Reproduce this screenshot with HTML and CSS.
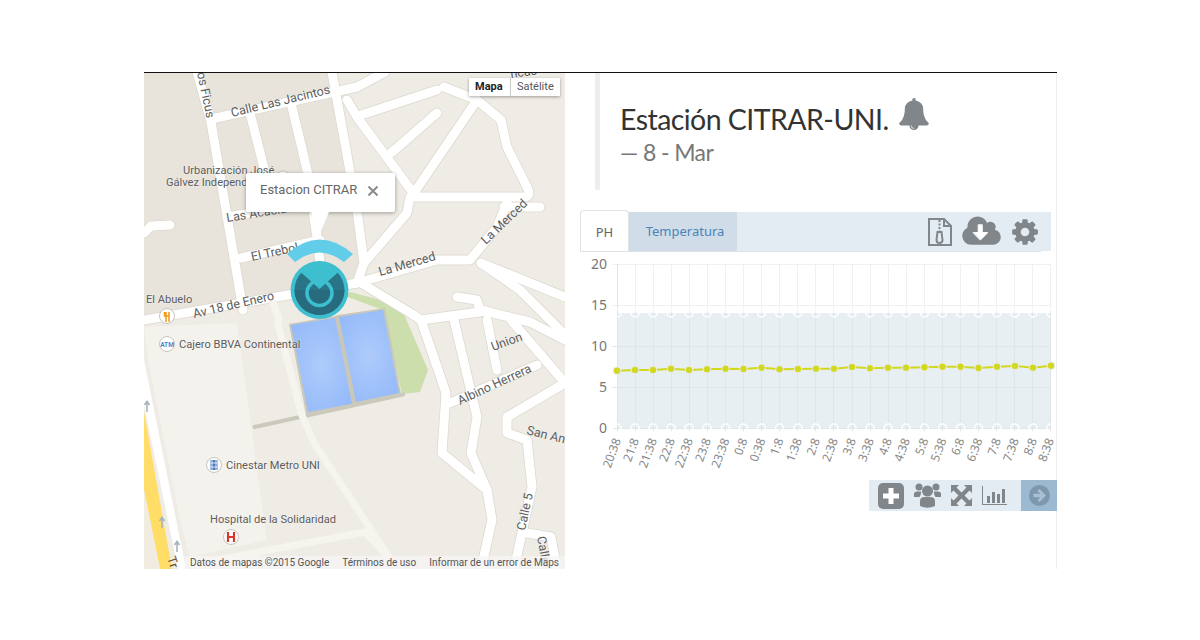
FILE: index.html
```html
<!DOCTYPE html>
<html lang="es">
<head>
<meta charset="utf-8">
<title>Estación CITRAR-UNI</title>
<link rel="stylesheet" href="styles.css">
</head>
<body>
<div class="page">
  <div class="map">
    <svg class="map-art" viewBox="144 72 421 497" width="421" height="497">
      <defs>
        <radialGradient id="pool" cx="50%" cy="50%" r="65%">
          <stop offset="0" stop-color="#aecbfb"/>
          <stop offset="1" stop-color="#93b9f9"/>
        </radialGradient>
        <g id="roads">
          <path d="M197 72L211 122L243 310"/>
          <path d="M211 119L357 87L385 72"/>
          <path d="M250 113L265 172"/>
          <path d="M292 107L307 170L317 237L320 263"/>
          <path d="M332 72L357 210L364 263"/>
          <path d="M347 100L357 117L411 190"/>
          <path d="M361 115L437 90"/>
          <path d="M477 100L414 193"/>
          <path d="M391 153L437 113"/>
          <path d="M414 197L524 197Q532 197 527 187L507 147L501 120L477 100L444 87"/>
          <path d="M504 207L540 207"/>
          <path d="M410 197L407 213L364 263L357 283"/>
          <path d="M357 283L437 260L470 260L497 227L507 203"/>
          <path d="M241 258L320 240"/>
          <path d="M227 217L314 203"/>
          <path d="M144 320L357 283"/>
          <path d="M144 233L151 226L170 225"/>
          <path d="M361 283L412 314L421 320L446 393L442 453L487 490L492 520L481 569"/>
          <path d="M454 320L477 417L471 453L487 490"/>
          <path d="M487 320L497 370"/>
          <path d="M511 320L565 383"/>
          <path d="M450 403L537 365"/>
          <path d="M565 383L507 417L507 433L527 440L532 487L514 569"/>
          <path d="M527 533L551 537L557 569"/>
          <path d="M481 263L565 297"/>
          <path d="M481 263L520 290L565 335"/>
          <path d="M457 297L477 300L480 310L530 322L565 340"/>
          <path d="M421 320L487 311"/>
        </g>
      </defs>
      <rect x="144" y="72" width="421" height="497" fill="#efece5"/>
      <polygon points="144,72 332,72 364,263 357,283 144,320" fill="#e8e4dc"/>
      <polygon points="144,327 237,323 267,540 190,557 180,520 150,370" fill="#f4f2ec"/>
      <polygon points="237,323 277,320 314,443 380,525 267,540" fill="#efece5"/>
      <polygon points="350,292 400,305 428,370 420,392 402,394 383,310 345,296" fill="#cbdeab"/>

      <use href="#roads" class="road-casing"/>
      <use href="#roads" class="road"/>

      <polygon points="144,360 144,405 178,569 186,569" fill="#ffffff"/>
      <polygon points="144,412 172,569 160,569 144,490" fill="#ffdd66"/>
      <polygon points="144,490 160,569 144,569" fill="#f1ece0"/>

      <polygon points="289,324 335,316 338,315 385,308 401,394 358,404 306,414" fill="#c9c7ba"/>
      <polygon points="291,325 335,318 352,404 308,412" fill="url(#pool)"/>
      <polygon points="339,317 383,310 399,393 356,402" fill="url(#pool)"/>
      <path class="bar" d="M254.500 427L403 394.500"/>

      <g class="path-road">
        <path d="M277 320L301 413L314 443L391 560"/>
        <path d="M190 565L365 532L391 560"/>
        <path d="M272 300L280 322"/>
      </g>

      <g class="lbl lbl-street">
        <text transform="translate(232 117) rotate(-13.500)">Calle Las Jacintos</text>
        <text transform="translate(197 73) rotate(78)">os Ficus</text>
        <text transform="translate(227 222) rotate(-9)">Las Acacias</text>
        <text transform="translate(252 261) rotate(-12)">El Trebol</text>
        <text transform="translate(380 276) rotate(-16)">La Merced</text>
        <text transform="translate(486 245) rotate(-44)">La Merced</text>
        <text transform="translate(194 318) rotate(-13)">Av 18 de Enero</text>
        <text transform="translate(493 351) rotate(-20)">Union</text>
        <text transform="translate(460 405) rotate(-25)">Albino Herrera</text>
        <text transform="translate(526 434) rotate(14)">San Andrés</text>
        <text transform="translate(525 531) rotate(-78)">Calle 5</text>
        <text transform="translate(537 537) rotate(80)">Calle</text>
        <text transform="translate(511 78) rotate(-8)">ncas</text>
        <text class="lbl-dark" transform="translate(167 558) rotate(72)">Tr</text>
      </g>
      <g class="lbl lbl-poi">
        <text x="183" y="174">Urbanización José</text>
        <text x="166" y="186">Gálvez Independencia</text>
        <text x="146" y="303">El Abuelo</text>
        <text x="179" y="348">Cajero BBVA Continental</text>
        <text x="226" y="469">Cinestar Metro UNI</text>
        <text x="210" y="523">Hospital de la Solidaridad</text>
      </g>

      <g class="poi">
        <circle cx="283" cy="178" r="7"/>
        <circle cx="167" cy="316" r="7.500"/>
        <circle cx="167" cy="344" r="7.500"/>
        <circle cx="214" cy="465" r="7.500"/>
        <circle cx="231" cy="537" r="7.500"/>
      </g>
      <path d="M164.500 312V316H169M166 312V322M169 312V322" fill="none" stroke="#f09a1c" stroke-width="1.500"/>
      <text class="atm" x="167" y="346.500">ATM</text>
      <rect x="210.500" y="460" width="7" height="10" fill="#4a7cc0"/>
      <path d="M212 460V470M216 460V470M210.500 463H217.500M210.500 467H217.500" stroke="#fff" stroke-width=".8"/>
      <path d="M228 532V542M234 532V542M228 537H234" stroke="#d8372c" stroke-width="2.200" fill="none"/>

      <g class="arrow-road">
        <path d="M147 412V402M144.500 405L147 401.500L149.500 405"/>
        <path d="M162 528V518M159.500 521L162 517.500L164.500 521"/>
        <path d="M177 552V542M174.500 545L177 541.500L179.500 545"/>
      </g>

      <path d="M287 254Q319.500 225 353 254L344 262Q319.500 243 295 262Z" fill="#62cde9"/>
      <circle cx="319.500" cy="290" r="29" fill="#3dbfd0"/>
      <circle cx="319.500" cy="290" r="25" fill="#2a7488"/>
      <path d="M294.500 290A25 25 0 0 0 344.500 290Z" fill="#286a7e"/>
      <circle cx="319.500" cy="293" r="12.500" fill="none" stroke="#3dbfd0" stroke-width="3.500"/>
      <path d="M300 271.500L319.500 289L339 271.500Q330 263 319.500 263Q309 263 300 271.500Z" fill="#3dbfd0"/>
    </svg>

    <div class="map-type">
      <span class="map-type-item map-type-on">Mapa</span>
      <span class="map-type-item">Satélite</span>
    </div>

    <div class="info">
      <span class="info-text">Estacion CITRAR</span>
      <svg class="info-close" viewBox="0 0 10 10" width="10" height="10"><path d="M0.500 0.500L9.500 9.500M9.500 0.500L0.500 9.500"/></svg>
    </div>

    <div class="attribution">
      <span class="attr-item attr-data">Datos de mapas ©2015 Google</span>
      <span class="attr-item attr-terms">Términos de uso</span>
      <span class="attr-item">Informar de un error de Maps</span>
    </div>
  </div>

  <div class="panel">
    <div class="quote">
      <h1 class="title"><span class="title-text">Estación CITRAR-UNI.</span>
        <svg class="bell" viewBox="0 0 1792 1792" width="32" height="32"><path d="M912 1696q0-16-16-16-59 0-101.500-42.500t-42.500-101.500q0-16-16-16t-16 16q0 73 51.500 124.500t124.500 51.500q16 0 16-16zm816-288q0 52-38 90t-90 38h-448q0 106-75 181t-181 75-181-75-75-181h-448q-52 0-90-38t-38-90q50-42 91-88t85-119.500 74.500-158.500 50-206 19.500-260q0-152 117-282.500t307-158.500q-8-19-8-39 0-40 28-68t68-28 68 28 28 68q0 20-8 39 190 28 307 158.500t117 282.500q0 139 19.500 260t50 206 74.500 158.500 85 119.500 91 88z"/></svg>
      </h1>
      <p class="sub">— 8 - Mar</p>
    </div>

    <div class="tabs">
      <div class="tab tab-active">PH</div>
      <div class="tab tab-other">Temperatura</div>
      <div class="tab-tools">
        <svg class="ico ico-zip" viewBox="0 0 24 28" width="24" height="28"><path class="ico-line" d="M1 1H16L23 8V27H1Z"/><path class="ico-line" d="M16 1V8H23"/><path class="ico-dash" d="M11.500 2V13"/><path class="ico-line" d="M9.500 14H13.500L14.500 22A3 3 0 0 1 8.500 22Z"/></svg>
        <svg class="ico" viewBox="0 0 1920 1792" width="39" height="36"><path class="ico-white" d="M800 500H1120V900H1320L960 1320L600 900H800Z"/><path d="M1280 928q0-14-9-23t-23-9h-224v-352q0-13-9.500-22.500t-22.500-9.500h-192q-13 0-22.500 9.500t-9.500 22.500v352h-224q-13 0-22.500 9.500t-9.500 22.500q0 14 9 23l352 352q9 9 23 9t23-9l351-351q10-12 10-24zm640 224q0 159-112.500 271.500t-271.500 112.500h-1088q-185 0-316.500-131.500t-131.500-316.500q0-130 70-240t188-165q-2-30-2-43 0-212 150-362t362-150q156 0 285.500 87t188.500 231q71-62 166-62 106 0 181 75t75 181q0 76-41 138 130 31 213.500 135.500t83.500 238.500z"/></svg>
        <svg class="ico" viewBox="0 0 1792 1792" width="30" height="30"><path d="M1152 896q0-106-75-181t-181-75-181 75-75 181 75 181 181 75 181-75 75-181zm512-109v222q0 12-8 23t-20 13l-185 28q-19 54-39 91 35 50 107 138 10 12 10 25t-9 23q-27 37-99 108t-94 71q-12 0-26-9l-138-108q-44 23-91 38-16 136-29 186-7 28-36 28h-222q-14 0-24.500-8.500t-11.500-21.500l-28-184q-49-16-90-37l-141 107q-10 9-25 9-14 0-25-11-126-114-165-168-7-10-7-23 0-12 8-23 15-21 51-66.500t54-70.500q-27-50-41-99l-183-27q-13-2-21-12.500t-8-23.500v-222q0-12 8-23t19-13l186-28q14-46 39-92-40-57-107-138-10-12-10-24 0-10 9-23 26-36 98.500-107.500t94.500-71.500q13 0 26 10l138 107q44-23 91-38 16-136 29-186 7-28 36-28h222q14 0 24.500 8.500t11.500 21.500l28 184q49 16 90 37l142-107q9-9 24-9 13 0 25 10 129 119 165 170 7 8 7 22 0 12-8 23-15 21-51 66.500t-54 70.500q26 50 41 98l183 28q13 2 21 12.500t8 23.500z"/></svg>
      </div>
    </div>
    <div class="tab-rule"></div>

    <svg class="chart" viewBox="565 252 491 226" width="491" height="226">
      <rect x="617" y="313" width="434" height="115" fill="#e8eff3"/>
      <path class="grid" d="M612 264.500H1051M612 305.500H1051"/>
      <path class="grid-in" d="M612 346.500H1051M612 387.500H1051M612 428.500H1051"/>
      <path class="grid" d="M635.500 264V313M653.500 264V313M671.500 264V313M689.500 264V313M707.500 264V313M725.500 264V313M743.500 264V313M761.500 264V313M779.500 264V313M797.500 264V313M815.500 264V313M833.500 264V313M852.500 264V313M870.500 264V313M888.500 264V313M906.500 264V313M924.500 264V313M942.500 264V313M960.500 264V313M978.500 264V313M996.500 264V313M1014.500 264V313M1032.500 264V313M1050.500 264V313"/>
      <path class="grid-in" d="M617.500 264V432M635.500 313V432M653.500 313V432M671.500 313V432M689.500 313V432M707.500 313V432M725.500 313V432M743.500 313V432M761.500 313V432M779.500 313V432M797.500 313V432M815.500 313V432M833.500 313V432M852.500 313V432M870.500 313V432M888.500 313V432M906.500 313V432M924.500 313V432M942.500 313V432M960.500 313V432M978.500 313V432M996.500 313V432M1014.500 313V432M1032.500 313V432M1050.500 313V432"/>
      <g class="holes">
        <circle cx="617" cy="313" r="4"/><circle cx="635" cy="313" r="4"/><circle cx="653" cy="313" r="4"/><circle cx="671" cy="313" r="4"/><circle cx="689" cy="313" r="4"/><circle cx="707" cy="313" r="4"/><circle cx="725.500" cy="313" r="4"/><circle cx="743.500" cy="313" r="4"/><circle cx="761.500" cy="313" r="4"/><circle cx="779.500" cy="313" r="4"/><circle cx="798" cy="313" r="4"/><circle cx="816" cy="313" r="4"/><circle cx="834" cy="313" r="4"/><circle cx="852" cy="313" r="4"/><circle cx="870" cy="313" r="4"/><circle cx="888" cy="313" r="4"/><circle cx="906" cy="313" r="4"/><circle cx="924.500" cy="313" r="4"/><circle cx="942.500" cy="313" r="4"/><circle cx="960.500" cy="313" r="4"/><circle cx="978.500" cy="313" r="4"/><circle cx="997" cy="313" r="4"/><circle cx="1015" cy="313" r="4"/><circle cx="1033" cy="313" r="4"/><circle cx="1051" cy="313" r="4"/>
        <circle cx="617" cy="428" r="4"/><circle cx="635" cy="428" r="4"/><circle cx="653" cy="428" r="4"/><circle cx="671" cy="428" r="4"/><circle cx="689" cy="428" r="4"/><circle cx="707" cy="428" r="4"/><circle cx="725.500" cy="428" r="4"/><circle cx="743.500" cy="428" r="4"/><circle cx="761.500" cy="428" r="4"/><circle cx="779.500" cy="428" r="4"/><circle cx="798" cy="428" r="4"/><circle cx="816" cy="428" r="4"/><circle cx="834" cy="428" r="4"/><circle cx="852" cy="428" r="4"/><circle cx="870" cy="428" r="4"/><circle cx="888" cy="428" r="4"/><circle cx="906" cy="428" r="4"/><circle cx="924.500" cy="428" r="4"/><circle cx="942.500" cy="428" r="4"/><circle cx="960.500" cy="428" r="4"/><circle cx="978.500" cy="428" r="4"/><circle cx="997" cy="428" r="4"/><circle cx="1015" cy="428" r="4"/><circle cx="1033" cy="428" r="4"/><circle cx="1051" cy="428" r="4"/>
      </g>
      <polyline class="series" points="617,370.700 635,370 653,370 671,368.700 689,370 707,369.300 725.500,368.700 743.500,369 761.500,367.700 779.500,369.300 798,369 816,368.700 834,368.700 852,367 870,368.300 888,367.700 906,367.700 924.500,367.300 942.500,366.700 960.500,366.700 978.500,368 997,366.700 1015,366 1033,367.700 1051,365.700"/>
      <g class="dots">
        <circle cx="617" cy="370.700" r="3.800"/><circle cx="635" cy="370" r="3.800"/><circle cx="653" cy="370" r="3.800"/><circle cx="671" cy="368.700" r="3.800"/><circle cx="689" cy="370" r="3.800"/><circle cx="707" cy="369.300" r="3.800"/><circle cx="725.500" cy="368.700" r="3.800"/><circle cx="743.500" cy="369" r="3.800"/><circle cx="761.500" cy="367.700" r="3.800"/><circle cx="779.500" cy="369.300" r="3.800"/><circle cx="798" cy="369" r="3.800"/><circle cx="816" cy="368.700" r="3.800"/><circle cx="834" cy="368.700" r="3.800"/><circle cx="852" cy="367" r="3.800"/><circle cx="870" cy="368.300" r="3.800"/><circle cx="888" cy="367.700" r="3.800"/><circle cx="906" cy="367.700" r="3.800"/><circle cx="924.500" cy="367.300" r="3.800"/><circle cx="942.500" cy="366.700" r="3.800"/><circle cx="960.500" cy="366.700" r="3.800"/><circle cx="978.500" cy="368" r="3.800"/><circle cx="997" cy="366.700" r="3.800"/><circle cx="1015" cy="366" r="3.800"/><circle cx="1033" cy="367.700" r="3.800"/><circle cx="1051" cy="365.700" r="3.800"/>
      </g>
      <g class="y-labels">
        <text x="607" y="268.500">20</text><text x="607" y="310">15</text><text x="607" y="351">10</text><text x="607" y="392">5</text><text x="607" y="433">0</text>
      </g>
      <g class="x-labels">
        <text transform="translate(621 440) rotate(-70)">20:38</text>
        <text transform="translate(639 440) rotate(-70)">21:8</text>
        <text transform="translate(657 440) rotate(-70)">21:38</text>
        <text transform="translate(675 440) rotate(-70)">22:8</text>
        <text transform="translate(693 440) rotate(-70)">22:38</text>
        <text transform="translate(711 440) rotate(-70)">23:8</text>
        <text transform="translate(729.500 440) rotate(-70)">23:38</text>
        <text transform="translate(747.500 440) rotate(-70)">0:8</text>
        <text transform="translate(765.500 440) rotate(-70)">0:38</text>
        <text transform="translate(783.500 440) rotate(-70)">1:8</text>
        <text transform="translate(802 440) rotate(-70)">1:38</text>
        <text transform="translate(820 440) rotate(-70)">2:8</text>
        <text transform="translate(838 440) rotate(-70)">2:38</text>
        <text transform="translate(856 440) rotate(-70)">3:8</text>
        <text transform="translate(874 440) rotate(-70)">3:38</text>
        <text transform="translate(892 440) rotate(-70)">4:8</text>
        <text transform="translate(910 440) rotate(-70)">4:38</text>
        <text transform="translate(928.500 440) rotate(-70)">5:8</text>
        <text transform="translate(946.500 440) rotate(-70)">5:38</text>
        <text transform="translate(964.500 440) rotate(-70)">6:8</text>
        <text transform="translate(982.500 440) rotate(-70)">6:38</text>
        <text transform="translate(1001 440) rotate(-70)">7:8</text>
        <text transform="translate(1019 440) rotate(-70)">7:38</text>
        <text transform="translate(1037 440) rotate(-70)">8:8</text>
        <text transform="translate(1054 440) rotate(-70)">8:38</text>
      </g>
    </svg>

    <div class="toolbar">
      <div class="tool-icons">
        <svg class="ico" viewBox="0 0 26 26" width="26" height="26"><rect width="26" height="26" rx="5"/><path class="ico-white" d="M10.500 5H15.500V10.500H21V15.500H15.500V21H10.500V15.500H5V10.500H10.500Z"/></svg>
        <svg class="ico" viewBox="0 0 27 25" width="27" height="25"><circle cx="5" cy="4" r="3.500"/><circle cx="22" cy="4" r="3.500"/><circle cx="13.500" cy="8" r="5.500"/><path d="M0 11Q0 8.500 3 8.500H7Q7.500 11 5.500 14H0ZM27 11Q27 8.500 24 8.500H20Q19.500 11 21.500 14H27ZM6 18Q6 14.500 10 14H17Q21 14.500 21 18V23Q13.500 26.500 6 23Z"/></svg>
        <svg class="ico" viewBox="0 0 21 21" width="21" height="21"><path d="M0 0H8L5.500 2.500L10.500 7.500L15.500 2.500L13 0H21V8L18.500 5.500L13.500 10.500L18.500 15.500L21 13V21H13L15.500 18.500L10.500 13.500L5.500 18.500L8 21H0V13L2.500 15.500L7.500 10.500L2.500 5.500L0 8Z"/></svg>
        <svg class="ico" viewBox="0 0 25 19" width="25" height="19"><path d="M0 0H1V18H25V19H0Z"/><rect x="5" y="10" width="3" height="7"/><rect x="10" y="6" width="3" height="11"/><rect x="15" y="8" width="3" height="9"/><rect x="20" y="3" width="3" height="14"/></svg>
      </div>
      <div class="tool-next">
        <svg viewBox="0 0 21 21" width="21" height="21"><circle class="next-disc" cx="10.500" cy="10.500" r="10.500"/><path class="next-arrow" d="M10.500 4L17 10.500L10.500 17L8.500 15L11.500 12.200H4.500V8.800H11.500L8.500 6Z"/></svg>
      </div>
    </div>
  </div>
</div>
</body>
</html>
```

FILE: styles.css
```css
html, body { margin: 0; padding: 0; background: #fff; }
body { font-family: "Lato", "Noto Sans", sans-serif; }

.page {
  display: flex;
  width: 913px;
  height: 496px;
  margin: 72px 0 0 144px;
  border-top: 1px solid #111;
  overflow: hidden;
}

/* Map */
.map { position: relative; width: 421px; height: 496px; flex: none; overflow: hidden; }
.map-art { display: block; margin-top: -1px; }
.road, .road-casing { fill: none; stroke-linecap: round; stroke-linejoin: round; }
.road { stroke: #fff; stroke-width: 9; }
.road-casing { stroke: #dcd8cf; stroke-width: 10.500; }
.bar { fill: none; stroke: #cbc9bc; stroke-width: 4; stroke-linecap: round; }
.path-road path { fill: none; stroke: #f6f4ef; stroke-width: 7; stroke-linejoin: round; }
.lbl text { font-family: "Roboto", sans-serif; fill: #5c5c5c; stroke: rgba(255,255,255,.4); stroke-width: 1px; paint-order: stroke; }
.lbl-street text { font-size: 12.500px; }
.lbl-poi text { font-size: 11.100px; }
.lbl .lbl-dark { fill: #6b4a10; }
.poi circle { fill: #fff; stroke: #c8c5bd; stroke-width: 1; }
.atm { font: bold 6.500px "Roboto", sans-serif; fill: #4a86c8; text-anchor: middle; }
.arrow-road path { fill: none; stroke: #a9b5bd; stroke-width: 1.600; }

.map-type {
  position: absolute;
  top: 5px;
  left: 325px;
  display: flex;
  height: 18px;
  background: #fff;
  box-shadow: 0 1px 3px rgba(0,0,0,.35);
  font: 11px/18px "Roboto", sans-serif;
}
.map-type-item { padding: 0 6px; color: #565656; }
.map-type-on { width: 29px; padding: 0 6px; color: #222; font-weight: 700; border-right: 1px solid #c8c8c8; }

.info {
  position: absolute;
  top: 100px;
  left: 102px;
  box-sizing: border-box;
  width: 149px;
  height: 39px;
  display: flex;
  align-items: flex-start;
  justify-content: space-between;
  padding: 9px 17px 0 14px;
  background: #fff;
  border-radius: 2px;
  box-shadow: 0 1px 4px rgba(0,0,0,.35);
  font: 13px/16px "Roboto", sans-serif;
  color: #666;
}
.info::after {
  content: "";
  position: absolute;
  left: 65px;
  top: 39px;
  width: 0;
  height: 0;
  border-left: 9px solid transparent;
  border-right: 9px solid transparent;
  border-top: 21px solid #fff;
}
.info-close { margin-top: 4px; }
.info-close path { stroke: #8a8a8a; stroke-width: 2; fill: none; }

.attribution {
  position: absolute;
  right: 0;
  bottom: 0;
  display: flex;
  height: 13px;
  padding-left: 5px;
  background: rgba(245,245,245,.75);
  font: 10px/13px "Roboto", sans-serif;
  color: #555;
}
.attr-item { padding: 0 6px; }
.attr-data { padding-left: 0; margin-right: 1px; }
.attr-terms { margin-right: 1px; }

/* Panel */
.panel {
  width: 492px;
  box-sizing: border-box;
  flex: none;
  border-right: 1px solid #eee;
  display: flex;
  flex-direction: column;
}
.quote {
  box-sizing: border-box;
  height: 117px;
  margin-left: 30px;
  padding: 27px 0 0 20px;
  border-left: 5px solid #eee;
}
.title {
  margin: 0;
  display: flex;
  align-items: flex-start;
  gap: 9px;
  font-size: 28.500px;
  line-height: 38px;
  font-weight: 400;
  color: #333;
}
.title-text { letter-spacing: -0.550px; }
.bell { fill: #808689; margin-top: -2px; }
.sub { margin: 1px 0 0; font-size: 23px; line-height: 27px; letter-spacing: -0.600px; color: #777; }

.tabs {
  display: flex;
  align-items: flex-end;
  height: 39px;
  margin: 22px 5px 0 15px;
  background: #e4ecf3;
  font: 13px "Noto Sans", sans-serif;
}
.tab { box-sizing: border-box; text-align: center; }
.tab-active {
  width: 49px;
  height: 42px;
  margin-bottom: -1px;
  line-height: 43px;
  color: #666;
  background: #fff;
  border: 1px solid #e2e2e2;
  border-bottom: 0;
  border-radius: 4px 4px 0 0;
}
.tab-other { width: 108px; height: 39px; padding-left: 4px; line-height: 39px; background: #d0dde8; color: #4a84b8; }
.tab-tools { flex: 1; display: flex; align-items: center; justify-content: flex-end; gap: 9px; height: 39px; padding-right: 11px; }
.ico-zip { margin-right: 1px; }
.tab-rule { height: 1px; margin: 0 15px 0 15px; background: #dde2e6; }

.ico { fill: #808689; display: block; flex: none; }
.ico-white { fill: #fff; }
.ico-line { fill: none; stroke: #808689; stroke-width: 2; }
.ico-dash { fill: none; stroke: #808689; stroke-width: 2; stroke-dasharray: 2 1.500; }

.chart { display: block; flex: none; }
.grid { fill: none; stroke: #f0f0f0; stroke-width: 1; }
.grid-in { fill: none; stroke: #dfe5e8; stroke-width: 1; }
.holes circle { fill: none; stroke: #fff; stroke-width: 1.500; }
.series { fill: none; stroke: #d2d71f; stroke-width: 2; }
.dots circle { fill: #d2d71f; stroke: #e8eff3; stroke-width: 1; }
.y-labels text { font: 14px "Noto Sans", sans-serif; fill: #777; text-anchor: end; }
.x-labels text { font: 12px "Noto Sans", sans-serif; fill: #888; text-anchor: end; }

.toolbar {
  display: flex;
  align-self: flex-end;
  width: 188px;
  height: 31px;
  margin: 2px -1px 0 0;
  background: #e4ecf3;
}
.tool-icons { flex: 1; display: flex; align-items: center; gap: 10px; padding-left: 9px; }
.tool-next { width: 36px; display: flex; align-items: center; justify-content: center; background: #9cb9d2; }
.next-disc { fill: #7d98ad; }
.next-arrow { fill: #a9c0d3; }
```
